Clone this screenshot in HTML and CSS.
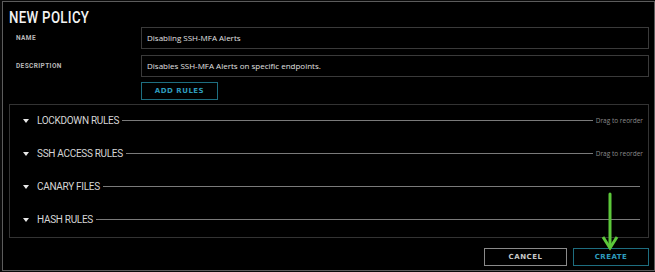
FILE: index.html
```html
<!DOCTYPE html>
<html lang="en">
<head>
  <meta charset="UTF-8">
  <title>New Policy</title>
  <link rel="stylesheet" href="styles.css">
</head>
<body>
  <div class="dialog">
    <h1><span>NEW POLICY</span></h1>
    <div class="field">
      <label>NAME</label>
      <div class="input">Disabling SSH-MFA Alerts</div>
    </div>
    <div class="field">
      <label>DESCRIPTION</label>
      <div class="input">Disables SSH-MFA Alerts on specific endpoints.</div>
    </div>
    <div class="add-row">
      <button class="btn teal add">ADD RULES</button>
    </div>
    <div class="rules">
      <div class="rule"><span class="caret"></span><span class="name">LOCKDOWN RULES</span><span class="line"></span><span class="drag">Drag to reorder</span></div>
      <div class="rule"><span class="caret"></span><span class="name">SSH ACCESS RULES</span><span class="line"></span><span class="drag">Drag to reorder</span></div>
      <div class="rule short"><span class="caret"></span><span class="name">CANARY FILES</span><span class="line"></span></div>
      <div class="rule short"><span class="caret"></span><span class="name">HASH RULES</span><span class="line"></span></div>
    </div>
    <div class="actions">
      <button class="btn grey cancel">CANCEL</button>
      <button class="btn teal create">CREATE</button>
    </div>
    <svg class="arrow" width="20" height="60" viewBox="0 0 20 60">
      <path d="M10 2 V55" stroke="#5cc83a" stroke-width="3" fill="none" stroke-linecap="round"/>
      <path d="M3 45 L10 56 L17 45" stroke="#5cc83a" stroke-width="3" fill="none"/>
    </svg>
  </div>
</body>
</html>
```

FILE: styles.css
```css
body {
  margin: 0;
  background: #0a0a0a;
  font-family: "Roboto", sans-serif;
}
.dialog {
  position: relative;
  margin: 1px 0 0 2px;
  width: 640px;
  height: 268px;
  border: 1px solid #5c5c5c;
  background: #000;
  padding: 0 5px 0 6px;
}
h1 {
  margin: 0;
  padding-top: 7px;
  height: 18px;
  font-size: 17px;
  font-weight: 500;
  color: #f2f2f2;
  line-height: 17px;
}
h1 span {
  display: inline-block;
  transform: scaleX(0.78);
  transform-origin: left center;
  letter-spacing: 0.4px;
}
.field {
  display: grid;
  grid-template-columns: 132px 1fr;
  align-items: center;
  margin-bottom: 6px;
}
label {
  padding-left: 7px;
  font-size: 6.5px;
  font-weight: bold;
  letter-spacing: 0.4px;
  color: #b8b8b8;
}
.input {
  height: 20px;
  border: 1px solid #3a3a3a;
  padding-left: 5px;
  font-family: "Open Sans", sans-serif;
  font-size: 8px;
  line-height: 20px;
  color: #e0e0e0;
}
.add-row {
  padding-left: 132px;
  margin-top: -1px;
}
.btn {
  display: block;
  background: #000;
  font-family: "DejaVu Sans", sans-serif;
  font-size: 7px;
  font-weight: bold;
  letter-spacing: 0.5px;
  height: 18px;
  padding: 0;
}
.teal {
  border: 1px solid #1e6e80;
  color: #2e9cbc;
}
.grey {
  border: 1px solid #8a8a8a;
  color: #c8c8c8;
}
.add {
  width: 77px;
}
.rules {
  margin-top: 4px;
  height: 132px;
  border: 1px solid #333;
}
.rule {
  display: flex;
  align-items: center;
  height: 33px;
  padding: 0 5px 0 13px;
}
.rule:first-child {
  margin-top: -1px;
}
.caret {
  width: 0;
  height: 0;
  border-left: 3px solid transparent;
  border-right: 3px solid transparent;
  border-top: 4px solid #e8e8e8;
  margin-right: 8px;
}
.name {
  font-size: 10px;
  letter-spacing: -0.3px;
  color: #d6d6d6;
  margin-right: 3px;
}
.line {
  flex: 1;
  height: 1px;
  background: #7a7a7a;
}
.short {
  padding-right: 8px;
}
.drag {
  font-family: "Open Sans", sans-serif;
  font-size: 6.5px;
  color: #8a8a8a;
  margin-left: 3px;
}
.actions {
  display: flex;
  justify-content: flex-end;
  gap: 6px;
  margin-top: 10px;
}
.cancel {
  width: 83px;
}
.create {
  width: 76px;
}
.arrow {
  position: absolute;
  left: 597px;
  top: 190px;
}
```
